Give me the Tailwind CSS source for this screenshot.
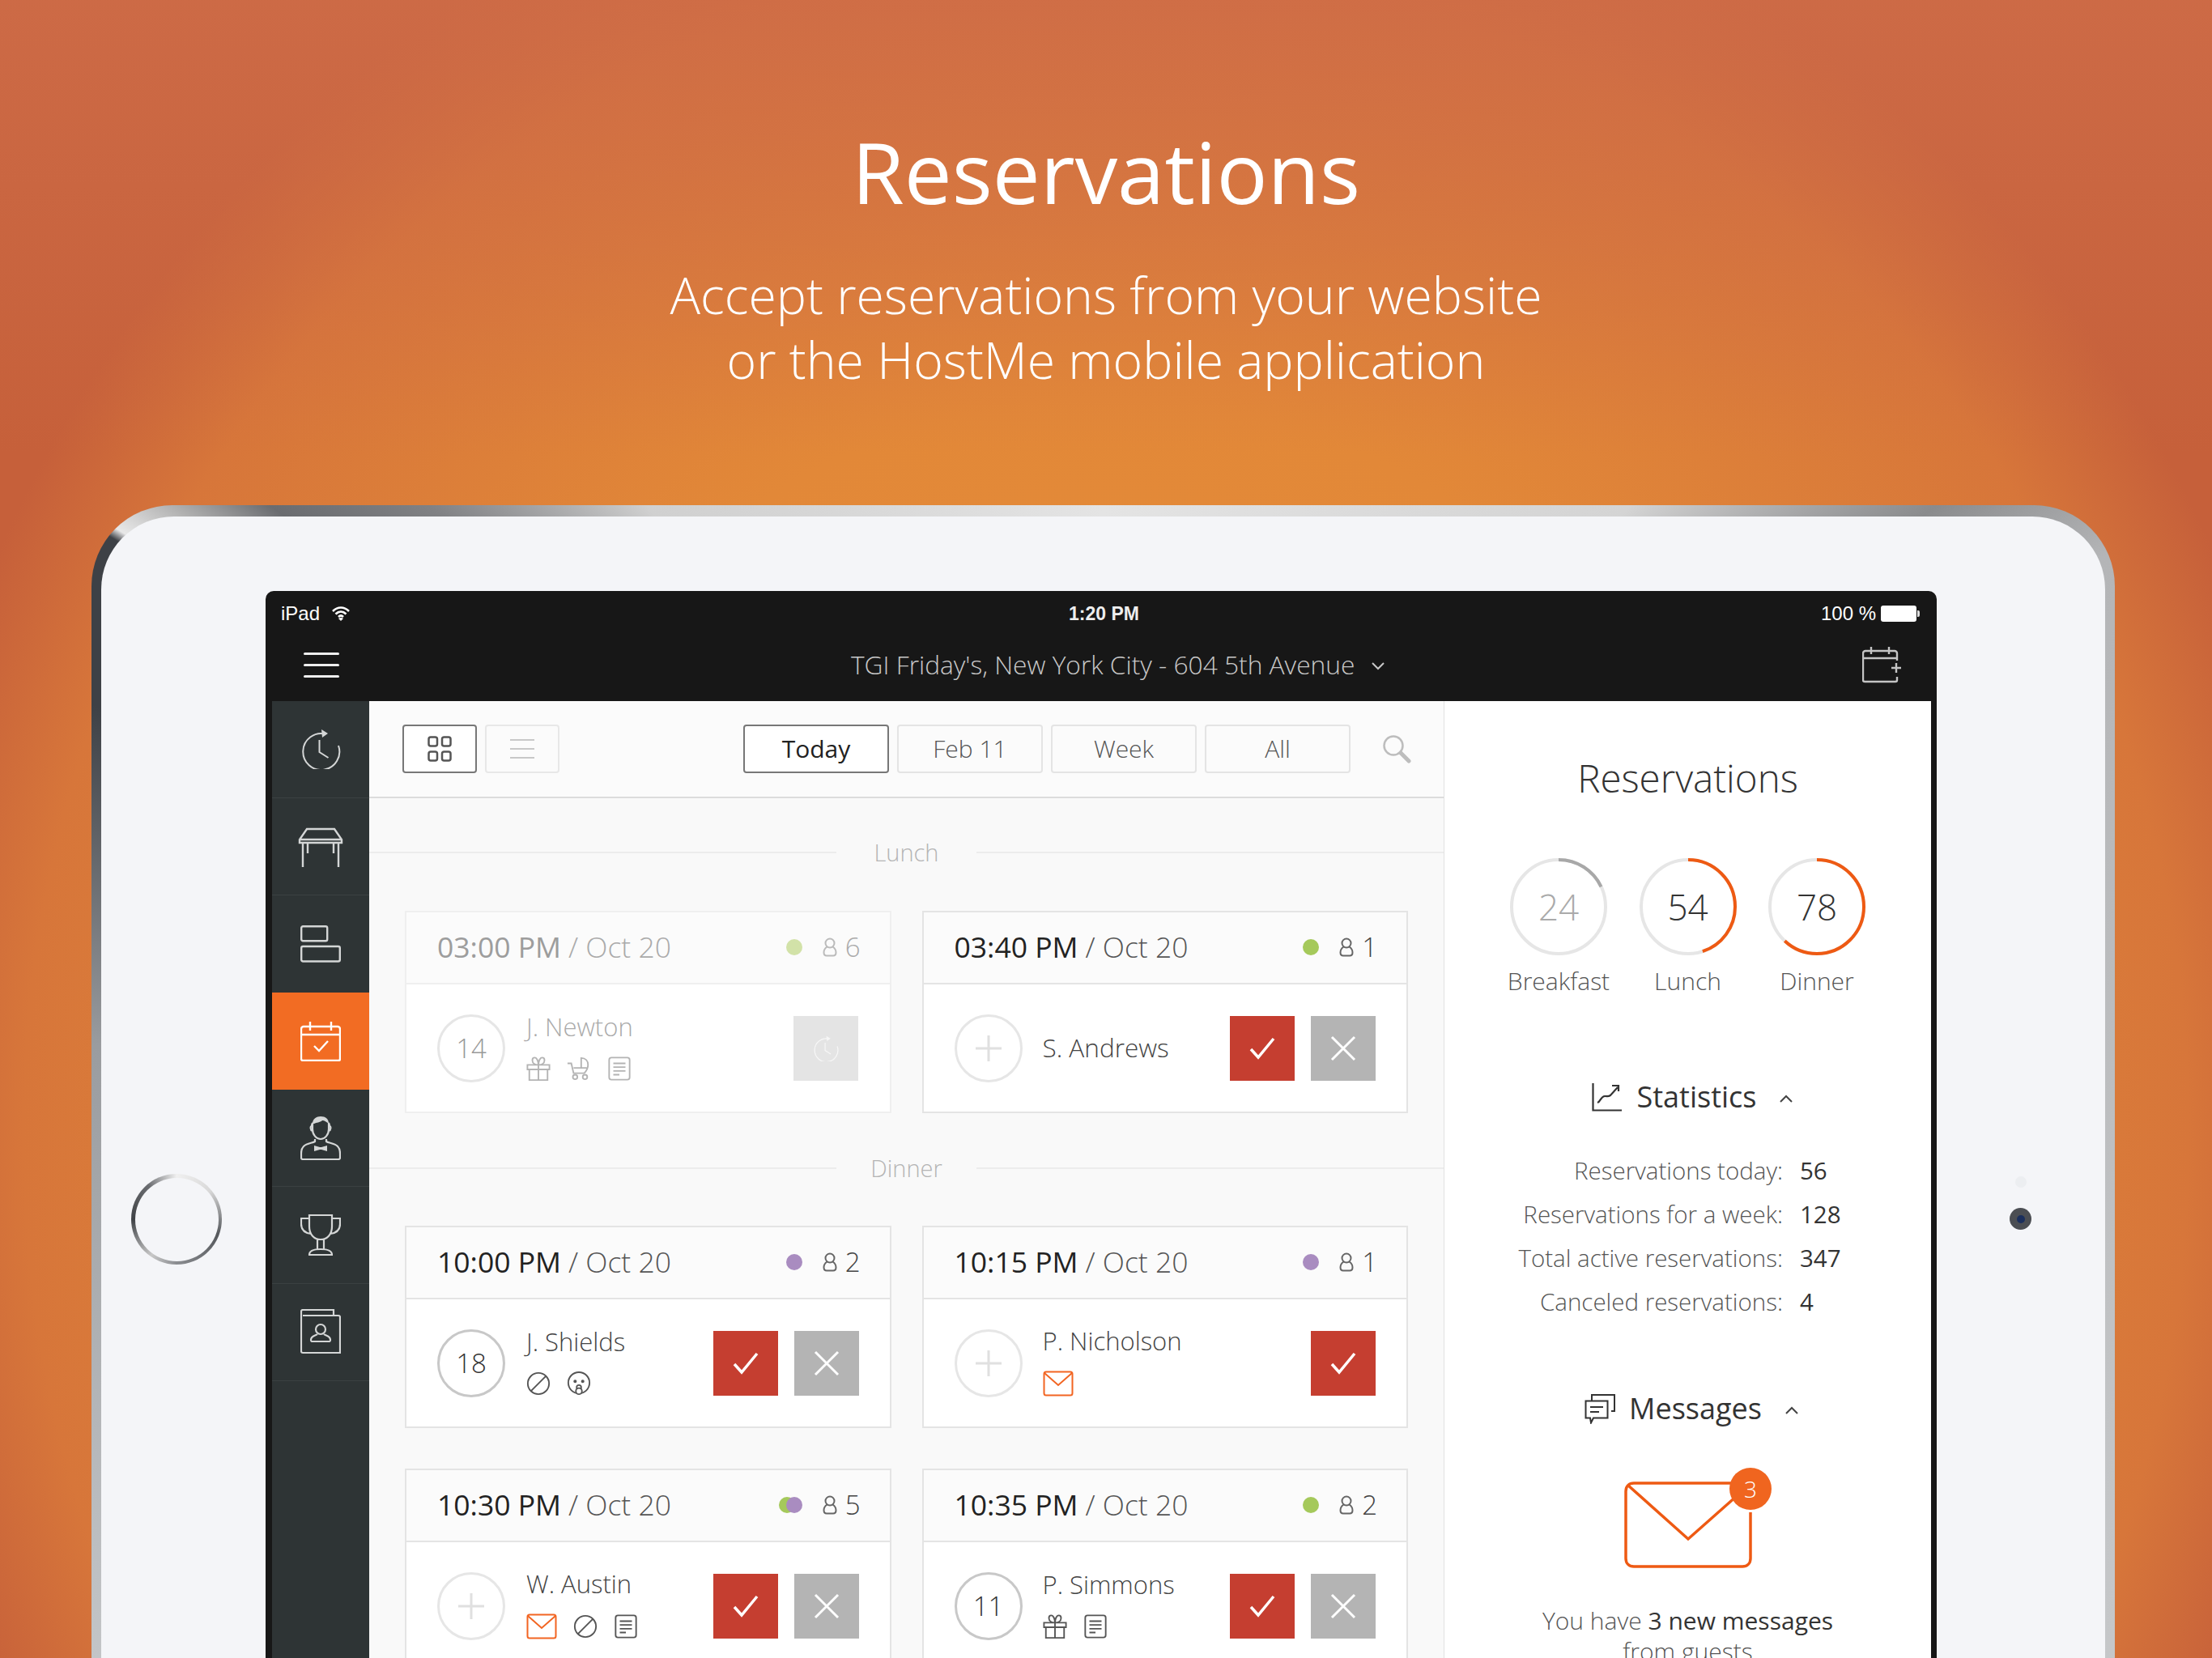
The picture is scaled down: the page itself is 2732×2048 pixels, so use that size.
<!DOCTYPE html>
<html lang="en">
<head>
    <meta charset="UTF-8">
    <title>Reservations</title>
    <script src="https://cdn.jsdelivr.net/npm/@tailwindcss/browser@4"></script>
</head>
<body class="font-['Open_Sans',sans-serif]">
<!-- icons -->
<svg class="absolute w-0 h-0" aria-hidden="true">
    <defs>
        <symbol id="i-clock" viewBox="0 0 50 50"><path d="M31 6.6A22.5 22.5 0 1 0 47 21" fill="none" stroke="currentColor" stroke-width="2"/><path d="M26 1l8 5-7 5" fill="currentColor"/><path d="M23.500 14v15l11 7" fill="none" stroke="currentColor" stroke-width="2"/></symbol>
        <symbol id="i-table" viewBox="0 0 56 50"><path d="M11 2h34l9 13v4H2v-4zM2 15h52M6 19v30M50 19v30M12 19v13M44 19v13" fill="none" stroke="currentColor" stroke-width="2.400"/></symbol>
        <symbol id="i-layout" viewBox="0 0 50 46"><rect x="1.200" y="1.200" width="32" height="18" rx="2" fill="none" stroke="currentColor" stroke-width="2.400"/><rect x="1.200" y="26" width="47.600" height="18.500" rx="2" fill="none" stroke="currentColor" stroke-width="2.400"/></symbol>
        <symbol id="i-cal" viewBox="0 0 50 50"><path d="M4 7h42a3 3 0 0 1 3 3v37a2 2 0 0 1-2 2H3a2 2 0 0 1-2-2V10a3 3 0 0 1 3-3zM1 17h48M12 1v11M38 1v11M17 31l6 6 11-12" fill="none" stroke="currentColor" stroke-width="2.400"/></symbol>
        <symbol id="i-waiter" viewBox="0 0 50 56"><path d="M15 11c0-6 5-9 10-9 6 0 10 3 10 9-3-2-5-4-8-4-3 3-7 2-10 4z" fill="currentColor"/><path d="M14 14c0-2 .5-3 1-4v8c0 7 5 12 10 12s10-5 10-12v-8c.5 1 1 2 1 4 2 0 2 5-1 6M14 14c-2 0-2 5 1 6M18 30v3c-3 2-10 2-14 6-2 2-3 5-3 9v5a2 2 0 0 0 2 2h44a2 2 0 0 0 2-2v-5c0-4-1-7-3-9-4-4-11-4-14-6v-3" fill="none" stroke="currentColor" stroke-width="2.200"/><path d="M17 38l7 2 2 0 7-2v7l-7-2h-2l-7 2z" fill="currentColor"/></symbol>
        <symbol id="i-trophy" viewBox="0 0 50 54"><path d="M11 3h28v14c0 10-6 16-14 16s-14-6-14-16zM11 7H1v7c0 7 5 11 12 12M39 7h10v7c0 7-5 11-12 12M21 33v12M29 33v12M11 52c0-5 5-7 14-7s14 2 14 7M10 52h30" fill="none" stroke="currentColor" stroke-width="2.200"/></symbol>
        <symbol id="i-book" viewBox="0 0 50 56"><path d="M1 8V3a2 2 0 0 1 2-2h38v7M3 8h44a2 2 0 0 1 2 2v44H3a2 2 0 0 1-2-2V8" fill="none" stroke="currentColor" stroke-width="2.200"/><circle cx="25" cy="25" r="6" fill="none" stroke="currentColor" stroke-width="2.200"/><path d="M21 31c-2 2-8 2-8 7 0 1.500 0 2 2 2h20c2 0 2-.5 2-2 0-5-6-5-8-7" fill="none" stroke="currentColor" stroke-width="2.200"/></symbol>
        <symbol id="i-grid" viewBox="0 0 30 32"><rect x="1.500" y="1.500" width="10.500" height="11" rx="2.500"/><rect x="18" y="1.500" width="10.500" height="11" rx="2.500"/><rect x="1.500" y="19.500" width="10.500" height="11" rx="2.500"/><rect x="18" y="19.500" width="10.500" height="11" rx="2.500"/></symbol>
        <symbol id="i-person" viewBox="0 0 18 24"><circle cx="9" cy="7" r="5.500"/><path d="M5.500 11.500C2.500 13.500 1.500 16 1.500 18.500c0 2.500 1 4 3.500 4h8c2.500 0 3.500-1.500 3.500-4 0-2.500-1-5-4-7"/></symbol>
        <symbol id="i-gift" viewBox="0 0 32 32"><path d="M1.500 11h29v6h-29zM4 17v14h24V17M16 11v20M11 1.500c3 0 5 5 5 9.500-4 0-8-2-8-6 0-2 1-3.500 3-3.500zM21 1.500c-3 0-5 5-5 9.500 4 0 8-2 8-6 0-2-1-3.500-3-3.500z"/></symbol>
        <symbol id="i-cart" viewBox="0 0 32 32"><path d="M1 9h5l3 13h14c3-3 5-7 5-11 0-5-3-9-9-9v13M9 15h19"/><circle cx="11" cy="27" r="3"/><circle cx="24" cy="27" r="3"/></symbol>
        <symbol id="i-note" viewBox="0 0 30 32"><rect x="1.500" y="1.500" width="27" height="29" rx="3"/><path d="M7 9h16M7 14h16M7 19h16M7 24h8"/></symbol>
        <symbol id="i-mail" viewBox="0 0 38 32"><rect x="1.500" y="1.500" width="35" height="29" rx="2.500"/><path d="M2 3l17 15L36 3"/></symbol>
        <symbol id="i-ban" viewBox="0 0 32 32"><circle cx="16" cy="16" r="14"/><path d="M6 26L26 6"/></symbol>
        <symbol id="i-baby" viewBox="0 0 32 32"><circle cx="16" cy="15" r="14"/><circle cx="11" cy="13" r="1.200" fill="currentColor"/><circle cx="21" cy="13" r="1.200" fill="currentColor"/><circle cx="16" cy="21" r="3"/><circle cx="16" cy="26" r="4" fill="#fff"/></symbol>
        <symbol id="i-check" viewBox="0 0 32 28"><path d="M2 15l9 10L30 2" fill="none" stroke="#fff" stroke-width="3.500"/></symbol>
        <symbol id="i-x" viewBox="0 0 32 32"><path d="M2 2l28 28M30 2L2 30" fill="none" stroke="#fff" stroke-width="3"/></symbol>
        <symbol id="i-plus" viewBox="0 0 34 34"><path d="M17 1v32M1 17h32" fill="none" stroke="currentColor" stroke-width="3"/></symbol>
    </defs>
</svg>

<div class="relative w-[2732px] h-[2048px] overflow-hidden bg-[linear-gradient(to_bottom,rgba(206,108,72,0.85)_0,rgba(206,108,72,0)_560px),radial-gradient(ellipse_1520px_1650px_at_50%_1400px,#e89038_0%,#e28838_55%,#d7763a_88%,#c6603a_100%)]">

    <!-- headline -->
    <div class="pt-[152px] text-center text-white">
        <h1 class="text-[105px] leading-[120px] font-normal">Reservations</h1>
        <p class="mt-[52px] text-[62.500px] leading-[80px] font-light">Accept reservations from your website<br>or the HostMe mobile application</p>
    </div>

    <!-- tablet -->
    <div class="relative ml-[113px] mt-[140px] w-[2499px] h-[1600px] pt-[14px] px-[12px] rounded-[100px] bg-[conic-gradient(at_50%_776px,#e4e4e4_0deg,#d4d4d4_40deg,#8a8b8d_53deg,#b4b5b7_60deg,#c6c8ca_120deg,#c6c8ca_240deg,#9a9c9f_275deg,#3e4146_293deg,#3e4146_301deg,#e8e8e8_301.5deg,#b0b0b0_304deg,#6a6c70_307deg,#808184_313deg,#d0d0d0_324deg,#e4e4e4_360deg)]">
        <div class="relative h-full pl-[203px] pt-[92px] rounded-[90px] bg-[#f4f5f8]">

            <!-- home button, sensor, camera -->
            <div class="absolute left-[37px] top-[812px] flex items-center justify-center w-[112px] h-[112px] rounded-full bg-[conic-gradient(#f0f0f0_0deg,#d8d8d8_50deg,#55585c_110deg,#8a8c90_180deg,#c8c8c8_215deg,#3f4246_270deg,#6a6c70_320deg,#f0f0f0_360deg)]">
                <div class="w-[103px] h-[103px] rounded-full bg-[#f4f5f8]"></div>
            </div>
            <div class="absolute left-[2364px] top-[815px] w-[14px] h-[14px] rounded-full bg-[#eceef1]"></div>
            <div class="absolute left-[2357px] top-[854px] w-[27px] h-[27px] rounded-full bg-[#4b4e53] flex items-center justify-center"><div class="w-[10px] h-[10px] rounded-full bg-[#1b2f5c]"></div></div>

            <!-- screen -->
            <div class="w-[2064px] h-[1500px] pl-[8px] pr-[7px] rounded-t-[10px] bg-[#171717]">

                <!-- status bar -->
                <div class="relative flex items-center h-[56px] pl-[11px] pr-[14px] text-white text-[24px] font-['Liberation_Sans',sans-serif]">
                    <span class="w-[52px]">iPad</span>
                    <svg class="ml-[10px]" width="24" height="20" viewBox="0 0 24 20"><path d="M2 7c6-6 14-6 20 0M5.500 10.500c4-4 9-4 13 0M9 14c2-2 4-2 6 0" fill="none" stroke="#fff" stroke-width="2.600"/><path d="M12 19l-3-3c2-1.500 4-1.500 6 0z" fill="#fff"/></svg>
                    <span class="absolute left-[984px] font-bold text-[23px] text-[#eee]">1:20 PM</span>
                    <span class="ml-auto">100 %</span>
                    <div class="ml-[6px] w-[44px] h-[20px] rounded-[3px] bg-white"></div>
                    <div class="ml-[1px] w-[3px] h-[8px] rounded-r-[2px] bg-[#ddd]"></div>
                </div>

                <!-- nav -->
                <div class="flex items-center h-[80px] pb-[10px] pl-[39px] pr-[35px]">
                    <div class="flex flex-col gap-[11px] w-[44px]">
                        <div class="h-[3px] rounded-full bg-[#eee]"></div>
                        <div class="h-[3px] rounded-full bg-[#eee]"></div>
                        <div class="h-[3px] rounded-full bg-[#eee]"></div>
                    </div>
                    <div class="flex items-center ml-[632px] text-[31.700px] font-light text-[#c8c8c8]">
                        <span>TGI Friday's, New York City - 604 5th Avenue</span>
                        <svg class="ml-[20px] mt-[4px]" width="18" height="11" viewBox="0 0 18 11"><path d="M2 2l7 7 7-7" fill="none" stroke="#c8c8c8" stroke-width="2"/></svg>
                    </div>
                    <svg class="ml-auto" width="50" height="46" viewBox="0 0 50 46"><path d="M43 18V9a3 3 0 0 0-3-3H4a3 3 0 0 0-3 3v33a2 2 0 0 0 2 2h38a2 2 0 0 0 2-2v-4M1 15h42M11 1v9M33 1v9M36 27h12M42 21v12" fill="none" stroke="#c4c4c4" stroke-width="2.400"/></svg>
                </div>

                <div class="flex h-[1364px]">
                    <!-- sidebar -->
                    <div class="w-[120px] bg-[#2e3435] text-[#d4d6d6]">
                        <div class="flex items-center justify-center h-[119.500px] border-b border-[#3b4142]"><svg class="w-[50px] h-[50px]"><use href="#i-clock"/></svg></div>
                        <div class="flex items-center justify-center h-[120px] pt-[3px] border-b border-[#3b4142]"><svg class="w-[56px] h-[50px]"><use href="#i-table"/></svg></div>
                        <div class="flex items-center justify-center h-[120px]"><svg class="w-[50px] h-[46px]"><use href="#i-layout"/></svg></div>
                        <div class="flex items-center justify-center h-[120px] bg-[#f26c23] text-white"><svg class="w-[50px] h-[50px]"><use href="#i-cal"/></svg></div>
                        <div class="flex items-center justify-center h-[120px] border-b border-[#3b4142]"><svg class="w-[50px] h-[56px]"><use href="#i-waiter"/></svg></div>
                        <div class="flex items-center justify-center h-[120px] border-b border-[#3b4142]"><svg class="w-[50px] h-[54px]"><use href="#i-trophy"/></svg></div>
                        <div class="flex items-center justify-center h-[120px] border-b border-[#3b4142]"><svg class="w-[50px] h-[56px]"><use href="#i-book"/></svg></div>
                    </div>

                    <!-- main column -->
                    <div class="w-[1328px] bg-[#f9f9f9] border-r border-[#e2e2e2] overflow-hidden">
                        <div class="flex items-center h-[120px] pb-[1px] pl-[41px] bg-[#fbfbfb] border-b-2 border-[#dcdcdc] text-[30px] font-light text-[#555]">
                            <div class="flex items-center justify-center w-[92px] h-[60px] rounded-[4px] border-2 border-[#777] bg-white text-[#555]"><svg class="w-[30px] h-[32px]" fill="none" stroke="currentColor" stroke-width="2.500"><use href="#i-grid"/></svg></div>
                            <div class="flex flex-col items-center justify-center gap-[9px] ml-[10px] w-[92px] h-[60px] rounded-[4px] border-2 border-[#e8e8e8]">
                                <div class="w-[30px] h-[2px] bg-[#c8c8c8]"></div>
                                <div class="w-[30px] h-[2px] bg-[#c8c8c8]"></div>
                                <div class="w-[30px] h-[2px] bg-[#c8c8c8]"></div>
                            </div>
                            <div class="flex items-center justify-center ml-[227px] w-[180px] h-[60px] rounded-[4px] border-2 border-[#777] bg-white text-[#222] font-normal">Today</div>
                            <div class="flex items-center justify-center ml-[10px] w-[180px] h-[60px] rounded-[4px] border-2 border-[#e4e4e4]">Feb 11</div>
                            <div class="flex items-center justify-center ml-[10px] w-[180px] h-[60px] rounded-[4px] border-2 border-[#e4e4e4]">Week</div>
                            <div class="flex items-center justify-center ml-[10px] w-[180px] h-[60px] rounded-[4px] border-2 border-[#e4e4e4]">All</div>
                            <svg class="ml-[39px]" width="36" height="36" viewBox="0 0 36 36"><circle cx="14" cy="14" r="11.500" fill="none" stroke="#bdbdbd" stroke-width="2.500"/><path d="M23 23l10 10" stroke="#bdbdbd" stroke-width="5" stroke-linecap="round"/></svg>
                        </div>

                        <!-- Lunch -->
                        <div class="flex items-center h-[40px] mt-[47px] mb-[52px] text-[29px] font-light text-[#b4b4b4]">
                            <div class="flex-1 h-[2px] bg-[#ececec]"></div>
                            <div class="w-[173px] text-center">Lunch</div>
                            <div class="flex-1 h-[2px] bg-[#ececec]"></div>
                        </div>
                        <div class="grid grid-cols-2 gap-x-[38px] w-[1239px] ml-[44px]">
                            <!-- 03:00 PM -->
                            <div class="h-[250px] border-2 border-[#efefef] bg-white">
                                <div class="flex items-center h-[89px] pb-[2px] pl-[38px] pr-[36px] border-b-2 border-[#efefef] bg-[#fbfbfb] text-[35.500px] font-light text-[#9d9d9d]">
                                    <span class="font-normal text-[#9d9d9d]">03:00 PM</span><span class="ml-[9px] text-[#aaa]">/ Oct 20</span>
                                    <div class="ml-auto w-[20px] h-[20px] rounded-full bg-[#d2e2a8]"></div>
                                    <svg class="ml-[25px] w-[18px] h-[24px] text-[#bbb]" fill="none" stroke="currentColor" stroke-width="2"><use href="#i-person"/></svg>
                                    <span class="ml-[10px] text-[#aaa] text-[33px]">6</span>
                                </div>
                                <div class="flex items-center h-[157px] pl-[38px] pr-[39px]">
                                    <div class="flex items-center justify-center w-[84px] h-[84px] rounded-full border-[3px] border-[#e6e6e6] text-[33px] font-light text-[#999]">14</div>
                                    <div class="ml-[26px] pb-[7px]">
                                        <div class="text-[31px] leading-[40px] font-light text-[#aaa]">J. Newton</div>
                                        <div class="flex items-center gap-[20px] mt-[17px] text-[#b4b4b4]" >
                                            <svg class="w-[30px] h-[30px]" fill="none" stroke="currentColor" stroke-width="2"><use href="#i-gift"/></svg>
                                            <svg class="w-[30px] h-[30px]" fill="none" stroke="currentColor" stroke-width="2"><use href="#i-cart"/></svg>
                                            <svg class="w-[30px] h-[30px]" fill="none" stroke="currentColor" stroke-width="2"><use href="#i-note"/></svg>
                                        </div>
                                    </div>
                                    <div class="flex items-center justify-center ml-auto w-[80px] h-[80px] bg-[#e4e4e4] text-[#f6f6f6]"><svg class="w-[32px] h-[32px]"><use href="#i-clock"/></svg></div>
                                </div>
                            </div>
                            <!-- 03:40 PM -->
                            <div class="h-[250px] border-2 border-[#e4e4e4] bg-white">
                                <div class="flex items-center h-[89px] pb-[2px] pl-[38px] pr-[36px] border-b-2 border-[#e4e4e4] bg-[#fbfbfb] text-[35.500px] font-light text-[#333]">
                                    <span class="font-normal text-[#222]">03:40 PM</span><span class="ml-[9px] text-[#555]">/ Oct 20</span>
                                    <div class="ml-auto w-[20px] h-[20px] rounded-full bg-[#a5c95b]"></div>
                                    <svg class="ml-[25px] w-[18px] h-[24px] text-[#666]" fill="none" stroke="currentColor" stroke-width="2"><use href="#i-person"/></svg>
                                    <span class="ml-[10px] text-[#444] text-[33px]">1</span>
                                </div>
                                <div class="flex items-center h-[157px] pl-[38px] pr-[38px]">
                                    <div class="flex items-center justify-center w-[84px] h-[84px] rounded-full border-[3px] border-[#e6e6e6] text-[#e0e0e0]"><svg class="w-[34px] h-[34px]"><use href="#i-plus"/></svg></div>
                                    <div class="ml-[25px] pb-[2px] text-[31.500px] font-light text-[#444]">S. Andrews</div>
                                    <div class="flex items-center justify-center ml-auto w-[80px] h-[80px] bg-[#c53e30]"><svg class="w-[32px] h-[28px]"><use href="#i-check"/></svg></div>
                                    <div class="flex items-center justify-center ml-[20px] w-[80px] h-[80px] bg-[#b4b4b4]"><svg class="w-[32px] h-[32px]"><use href="#i-x"/></svg></div>
                                </div>
                            </div>
                        </div>

                        <!-- Dinner -->
                        <div class="flex items-center h-[40px] mt-[48px] mb-[51px] text-[29px] font-light text-[#b4b4b4]">
                            <div class="flex-1 h-[2px] bg-[#ececec]"></div>
                            <div class="w-[173px] text-center">Dinner</div>
                            <div class="flex-1 h-[2px] bg-[#ececec]"></div>
                        </div>
                        <div class="grid grid-cols-2 gap-x-[38px] gap-y-[50px] w-[1239px] ml-[44px]">
                            <!-- 10:00 PM -->
                            <div class="h-[250px] border-2 border-[#e4e4e4] bg-white">
                                <div class="flex items-center h-[89px] pb-[2px] pl-[38px] pr-[36px] border-b-2 border-[#e4e4e4] bg-[#fbfbfb] text-[35.500px] font-light text-[#333]">
                                    <span class="font-normal text-[#222]">10:00 PM</span><span class="ml-[9px] text-[#555]">/ Oct 20</span>
                                    <div class="ml-auto w-[20px] h-[20px] rounded-full bg-[#a98cc0]"></div>
                                    <svg class="ml-[25px] w-[18px] h-[24px] text-[#666]" fill="none" stroke="currentColor" stroke-width="2"><use href="#i-person"/></svg>
                                    <span class="ml-[10px] text-[#444] text-[33px]">2</span>
                                </div>
                                <div class="flex items-center h-[157px] pl-[38px] pr-[38px]">
                                    <div class="flex items-center justify-center w-[84px] h-[84px] rounded-full border-[3px] border-[#c8c8c8] text-[33px] font-light text-[#333]">18</div>
                                    <div class="ml-[26px] pb-[7px]">
                                        <div class="text-[31px] leading-[40px] font-light text-[#444]">J. Shields</div>
                                        <div class="flex items-center gap-[20px] mt-[17px] text-[#555]">
                                            <svg class="w-[30px] h-[30px]" fill="none" stroke="currentColor" stroke-width="2"><use href="#i-ban"/></svg>
                                            <svg class="w-[30px] h-[30px]" fill="none" stroke="currentColor" stroke-width="2"><use href="#i-baby"/></svg>
                                        </div>
                                    </div>
                                    <div class="flex items-center justify-center ml-auto w-[80px] h-[80px] bg-[#c53e30]"><svg class="w-[32px] h-[28px]"><use href="#i-check"/></svg></div>
                                    <div class="flex items-center justify-center ml-[20px] w-[80px] h-[80px] bg-[#b4b4b4]"><svg class="w-[32px] h-[32px]"><use href="#i-x"/></svg></div>
                                </div>
                            </div>
                            <!-- 10:15 PM -->
                            <div class="h-[250px] border-2 border-[#e4e4e4] bg-white">
                                <div class="flex items-center h-[89px] pb-[2px] pl-[38px] pr-[36px] border-b-2 border-[#e4e4e4] bg-[#fbfbfb] text-[35.500px] font-light text-[#333]">
                                    <span class="font-normal text-[#222]">10:15 PM</span><span class="ml-[9px] text-[#555]">/ Oct 20</span>
                                    <div class="ml-auto w-[20px] h-[20px] rounded-full bg-[#a98cc0]"></div>
                                    <svg class="ml-[25px] w-[18px] h-[24px] text-[#666]" fill="none" stroke="currentColor" stroke-width="2"><use href="#i-person"/></svg>
                                    <span class="ml-[10px] text-[#444] text-[33px]">1</span>
                                </div>
                                <div class="flex items-center h-[157px] pl-[38px] pr-[38px]">
                                    <div class="flex items-center justify-center w-[84px] h-[84px] rounded-full border-[3px] border-[#e6e6e6] text-[#e0e0e0]"><svg class="w-[34px] h-[34px]"><use href="#i-plus"/></svg></div>
                                    <div class="ml-[25px] pb-[7px]">
                                        <div class="text-[31px] leading-[40px] font-light text-[#444]">P. Nicholson</div>
                                        <div class="flex items-center gap-[20px] mt-[17px] text-[#f26522]">
                                            <svg class="w-[38px] h-[32px]" fill="none" stroke="currentColor" stroke-width="2"><use href="#i-mail"/></svg>
                                        </div>
                                    </div>
                                    <div class="flex items-center justify-center ml-auto w-[80px] h-[80px] bg-[#c53e30]"><svg class="w-[32px] h-[28px]"><use href="#i-check"/></svg></div>
                                </div>
                            </div>
                            <!-- 10:30 PM -->
                            <div class="h-[250px] border-2 border-[#e4e4e4] bg-white">
                                <div class="flex items-center h-[89px] pb-[2px] pl-[38px] pr-[36px] border-b-2 border-[#e4e4e4] bg-[#fbfbfb] text-[35.500px] font-light text-[#333]">
                                    <span class="font-normal text-[#222]">10:30 PM</span><span class="ml-[9px] text-[#555]">/ Oct 20</span>
                                    <div class="ml-auto w-[20px] h-[20px] rounded-full bg-[#a5c95b]"></div>
                                    <div class="ml-[-11px] w-[20px] h-[20px] rounded-full bg-[#a98cc0]"></div>
                                    <svg class="ml-[25px] w-[18px] h-[24px] text-[#666]" fill="none" stroke="currentColor" stroke-width="2"><use href="#i-person"/></svg>
                                    <span class="ml-[10px] text-[#444] text-[33px]">5</span>
                                </div>
                                <div class="flex items-center h-[157px] pl-[38px] pr-[38px]">
                                    <div class="flex items-center justify-center w-[84px] h-[84px] rounded-full border-[3px] border-[#e6e6e6] text-[#e0e0e0]"><svg class="w-[34px] h-[34px]"><use href="#i-plus"/></svg></div>
                                    <div class="ml-[26px] pb-[7px]">
                                        <div class="text-[31px] leading-[40px] font-light text-[#444]">W. Austin</div>
                                        <div class="flex items-center gap-[20px] mt-[17px] text-[#555]">
                                            <svg class="w-[38px] h-[32px] text-[#f26522]" fill="none" stroke="currentColor" stroke-width="2"><use href="#i-mail"/></svg>
                                            <svg class="w-[30px] h-[30px]" fill="none" stroke="currentColor" stroke-width="2"><use href="#i-ban"/></svg>
                                            <svg class="w-[30px] h-[30px]" fill="none" stroke="currentColor" stroke-width="2"><use href="#i-note"/></svg>
                                        </div>
                                    </div>
                                    <div class="flex items-center justify-center ml-auto w-[80px] h-[80px] bg-[#c53e30]"><svg class="w-[32px] h-[28px]"><use href="#i-check"/></svg></div>
                                    <div class="flex items-center justify-center ml-[20px] w-[80px] h-[80px] bg-[#b4b4b4]"><svg class="w-[32px] h-[32px]"><use href="#i-x"/></svg></div>
                                </div>
                            </div>
                            <!-- 10:35 PM -->
                            <div class="h-[250px] border-2 border-[#e4e4e4] bg-white">
                                <div class="flex items-center h-[89px] pb-[2px] pl-[38px] pr-[36px] border-b-2 border-[#e4e4e4] bg-[#fbfbfb] text-[35.500px] font-light text-[#333]">
                                    <span class="font-normal text-[#222]">10:35 PM</span><span class="ml-[9px] text-[#555]">/ Oct 20</span>
                                    <div class="ml-auto w-[20px] h-[20px] rounded-full bg-[#a5c95b]"></div>
                                    <svg class="ml-[25px] w-[18px] h-[24px] text-[#666]" fill="none" stroke="currentColor" stroke-width="2"><use href="#i-person"/></svg>
                                    <span class="ml-[10px] text-[#444] text-[33px]">2</span>
                                </div>
                                <div class="flex items-center h-[157px] pl-[38px] pr-[38px]">
                                    <div class="flex items-center justify-center w-[84px] h-[84px] rounded-full border-[3px] border-[#c8c8c8] text-[33px] font-light text-[#333]">11</div>
                                    <div class="ml-[25px] pb-[7px]">
                                        <div class="text-[31px] leading-[40px] font-light text-[#444]">P. Simmons</div>
                                        <div class="flex items-center gap-[20px] mt-[17px] text-[#555]">
                                            <svg class="w-[30px] h-[30px]" fill="none" stroke="currentColor" stroke-width="2"><use href="#i-gift"/></svg>
                                            <svg class="w-[30px] h-[30px]" fill="none" stroke="currentColor" stroke-width="2"><use href="#i-note"/></svg>
                                        </div>
                                    </div>
                                    <div class="flex items-center justify-center ml-auto w-[80px] h-[80px] bg-[#c53e30]"><svg class="w-[32px] h-[28px]"><use href="#i-check"/></svg></div>
                                    <div class="flex items-center justify-center ml-[20px] w-[80px] h-[80px] bg-[#b4b4b4]"><svg class="w-[32px] h-[32px]"><use href="#i-x"/></svg></div>
                                </div>
                            </div>
                        </div>
                    </div>

                    <!-- right panel -->
                    <div class="w-[601px] bg-white text-center overflow-hidden">
                        <h2 class="mt-[65px] text-[47.500px] leading-[60px] font-light text-[#333]">Reservations</h2>
                        <div class="flex justify-center gap-[39.500px] mt-[69px]">
                            <div class="w-[120px]">
                                <div class="relative w-[120px] h-[120px]">
                                    <svg class="-rotate-90" width="120" height="120" viewBox="0 0 120 120"><circle cx="60" cy="60" r="58" fill="none" stroke="#e6e6e6" stroke-width="4"/><circle cx="60" cy="60" r="58" fill="none" stroke="#a8a8a8" stroke-width="4" pathLength="100" stroke-dasharray="18 100"/></svg>
                                    <div class="absolute inset-0 flex items-center justify-center text-[44px] font-light text-[#aaa]">24</div>
                                </div>
                            </div>
                            <div class="w-[120px]">
                                <div class="relative w-[120px] h-[120px]">
                                    <svg class="-rotate-90" width="120" height="120" viewBox="0 0 120 120"><circle cx="60" cy="60" r="58" fill="none" stroke="#e6e6e6" stroke-width="4"/><circle cx="60" cy="60" r="58" fill="none" stroke="#ee5a13" stroke-width="4" pathLength="100" stroke-dasharray="45 100"/></svg>
                                    <div class="absolute inset-0 flex items-center justify-center text-[44px] font-light text-[#333]">54</div>
                                </div>
                            </div>
                            <div class="w-[120px]">
                                <div class="relative w-[120px] h-[120px]">
                                    <svg class="-rotate-90" width="120" height="120" viewBox="0 0 120 120"><circle cx="60" cy="60" r="58" fill="none" stroke="#e6e6e6" stroke-width="4"/><circle cx="60" cy="60" r="58" fill="none" stroke="#ee5a13" stroke-width="4" pathLength="100" stroke-dasharray="62 100"/></svg>
                                    <div class="absolute inset-0 flex items-center justify-center text-[44px] font-light text-[#333]">78</div>
                                </div>
                            </div>
                        </div>
                        <div class="flex justify-center gap-[39.500px] mt-[12px] text-[30px] leading-[40px] font-light text-[#555]">
                            <div class="w-[120px] flex justify-center whitespace-nowrap">Breakfast</div>
                            <div class="w-[120px]">Lunch</div>
                            <div class="w-[120px]">Dinner</div>
                        </div>

                        <div class="flex items-center justify-center h-[50px] mt-[98px] pl-[12px] text-[36px] text-[#333]">
                            <svg width="38" height="36" viewBox="0 0 38 36"><path d="M1.500 1v33.500H37M7 25c4-1 4-8 9-8 4 0 4 1 7-1l9-10M25 4h8v7" fill="none" stroke="#333" stroke-width="2.200"/></svg>
                            <span class="ml-[18px] font-normal">Statistics</span>
                            <svg class="ml-[28px] mt-[4px]" width="18" height="11" viewBox="0 0 18 11"><path d="M2 9l7-7 7 7" fill="none" stroke="#444" stroke-width="2"/></svg>
                        </div>
                        <div class="grid grid-cols-[418px_1fr] gap-x-[21px] mt-[39px] text-[29.500px] leading-[54px]">
                            <div class="text-right font-light text-[#555]">Reservations today:</div><div class="text-left text-[#333]">56</div>
                            <div class="text-right font-light text-[#555]">Reservations for a week:</div><div class="text-left text-[#333]">128</div>
                            <div class="text-right font-light text-[#555]">Total active reservations:</div><div class="text-left text-[#333]">347</div>
                            <div class="text-right font-light text-[#555]">Canceled reservations:</div><div class="text-left text-[#333]">4</div>
                        </div>

                        <div class="flex items-center justify-center h-[50px] mt-[80px] pl-[10px] text-[36px] text-[#333]">
                            <svg width="38" height="38" viewBox="0 0 38 38"><path d="M9 9V2h28v20h-4M1.500 9.500h27v21H11l-3 6-1-6H1.500zM7 17h16M7 23h11" fill="none" stroke="#333" stroke-width="2"/></svg>
                            <span class="ml-[17px] font-normal">Messages</span>
                            <svg class="ml-[28px] mt-[4px]" width="18" height="11" viewBox="0 0 18 11"><path d="M2 9l7-7 7 7" fill="none" stroke="#444" stroke-width="2"/></svg>
                        </div>
                        <div class="relative w-[184px] h-[124px] mt-[48px] ml-[222px]">
                            <svg class="absolute left-0 top-[17px]" width="158" height="107" viewBox="0 0 158 107"><path d="M138 2H12C6 2 2 6 2 12v83c0 6 4 10 10 10h134c6 0 10-4 10-10V38" fill="none" stroke="#ee5a13" stroke-width="3.500"/><path d="M4 4l75 67 61-54" fill="none" stroke="#ee5a13" stroke-width="3.500"/></svg>
                            <div class="absolute left-[130px] top-0 flex items-center justify-center w-[52px] h-[52px] rounded-full bg-[#f0651f] text-white text-[28px] font-light">3</div>
                        </div>
                        <p class="mt-[46px] text-[30px] leading-[38px] font-light text-[#555]">You have <span class="font-normal text-[#333]">3 new messages</span><br>from guests</p>
                    </div>
                </div>
            </div>
        </div>
    </div>
</div>
</body>
</html>
